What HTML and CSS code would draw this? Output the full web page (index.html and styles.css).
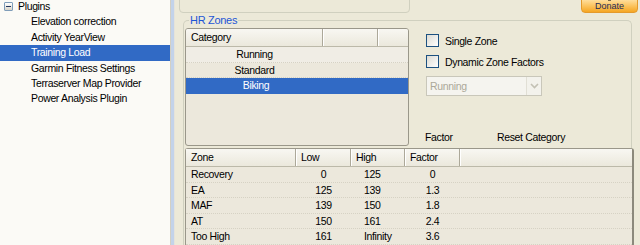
FILE: index.html
```html
<!DOCTYPE html>
<html>
<head>
<meta charset="utf-8">
<link rel="stylesheet" href="styles.css">
</head>
<body>
<div class="app">
  <aside class="tree">
    <div class="node root"><span class="expander"><span class="minus"></span></span><span>Plugins</span></div>
    <div class="node child">Elevation correction</div>
    <div class="node child">Activity YearView</div>
    <div class="node child selected">Training Load</div>
    <div class="node child">Garmin Fitness Settings</div>
    <div class="node child">Terraserver Map Provider</div>
    <div class="node child">Power Analysis Plugin</div>
  </aside>
  <div class="splitter"></div>
  <main class="main">
    <div class="toprow">
      <div class="topbox"></div>
      <div class="donate"><span class="donate-dot"></span><span>Donate</span></div>
    </div>
    <section class="group">
      <span class="legend">HR Zones</span>
      <div class="upper">
        <div class="catlist">
          <div class="lv-head cat-cols">
            <div class="hcell">Category</div>
            <div class="hcell"></div>
            <div class="hcell last"></div>
          </div>
          <div class="cat-row light"><span>Running</span></div>
          <div class="cat-row"><span>Standard</span></div>
          <div class="cat-row sel"><span class="indent">Biking</span></div>
        </div>
        <div class="options">
          <label class="check"><span class="box"></span><span>Single Zone</span></label>
          <label class="check"><span class="box"></span><span>Dynamic Zone Factors</span></label>
          <div class="combo">
            <span class="combo-text">Running</span>
            <span class="combo-btn">
              <svg width="9" height="6" viewBox="0 0 9 6"><path d="M1 1 L4.5 4.5 L8 1" fill="none" stroke="#c3c1b4" stroke-width="1.6"/></svg>
            </span>
          </div>
          <div class="labels">
            <span class="lbl-factor">Factor</span>
            <span>Reset Category</span>
          </div>
        </div>
      </div>
      <div class="zonetable">
        <div class="lv-head zone-cols">
          <div class="hcell">Zone</div>
          <div class="hcell">Low</div>
          <div class="hcell">High</div>
          <div class="hcell">Factor</div>
          <div class="hcell last"></div>
        </div>
        <div class="zone-row zone-cols"><span class="name">Recovery</span><span class="num">0</span><span class="num high">125</span><span class="num">0</span><span></span></div>
        <div class="zone-row zone-cols"><span class="name">EA</span><span class="num">125</span><span class="num high">139</span><span class="num">1.3</span><span></span></div>
        <div class="zone-row zone-cols"><span class="name">MAF</span><span class="num">139</span><span class="num high">150</span><span class="num">1.8</span><span></span></div>
        <div class="zone-row zone-cols"><span class="name">AT</span><span class="num">150</span><span class="num high">161</span><span class="num">2.4</span><span></span></div>
        <div class="zone-row zone-cols"><span class="name">Too High</span><span class="num">161</span><span class="num high">Infinity</span><span class="num">3.6</span><span></span></div>
      </div>
    </section>
  </main>
</div>
</body>
</html>
```
FILE: styles.css
```css
html, body {
  margin: 0;
  padding: 0;
  width: 640px;
  height: 245px;
  overflow: hidden;
  background: #ece9d8;
}
body {
  font-family: "Liberation Sans", Arial, sans-serif;
  font-size: 10.5px;
  letter-spacing: -0.35px;
  color: #000;
}
.app {
  display: flex;
  width: 640px;
  height: 245px;
}

/* Left tree */
.tree {
  width: 170px;
  flex: none;
  background: #fbfaf6;
  padding-top: 0;
  margin-top: -1px;
}
.node {
  height: 15.4px;
  line-height: 15.4px;
  white-space: nowrap;
  display: flex;
  align-items: center;
}
.node.root { padding-left: 4px; }
.expander {
  width: 7px;
  height: 7px;
  border: 1px solid #7f9db9;
  border-radius: 1px;
  background: linear-gradient(#ffffff, #d8d4c8);
  margin-right: 5px;
  display: flex;
  align-items: center;
  justify-content: center;
}
.minus {
  width: 5px;
  height: 1px;
  background: #23365e;
}
.node.child { padding-left: 31px; }
.node.selected {
  background: #316ac5;
  color: #fff;
}

/* Splitter */
.splitter {
  width: 3px;
  flex: none;
  border-left: 1px solid #d3d0c4;
  border-right: 1px solid #e5e3da;
  background: #c3d3ea;
}

/* Main */
.main {
  flex: 1;
  display: flex;
  flex-direction: column;
  min-width: 0;
}
.toprow {
  height: 13px;
  display: flex;
  flex: none;
}
.topbox {
  box-sizing: border-box;
  margin-left: 4px;
  width: 231px;
  height: 32px;
  margin-top: -19px;
  border: 1px solid #d0d0bf;
  border-radius: 4px;
}
.donate {
  box-sizing: border-box;
  margin-left: auto;
  margin-right: 2px;
  width: 57px;
  height: 15px;
  margin-top: -2px;
  border: 1px solid #e49a2c;
  border-radius: 0 0 4px 4px;
  background: linear-gradient(#ffe2a6, #fbbf55 60%, #f5a623);
  color: #1d2b57;
  font-size: 9px;
  letter-spacing: 0;
  display: flex;
  flex-direction: column;
  align-items: center;
  line-height: 10px;
}
.donate-dot {
  width: 3px;
  height: 2px;
  background: #7b6a4a;
  margin-bottom: 0;
}

/* Group box */
.group {
  position: relative;
  flex: 1;
  margin: 7px 8px 0 8px;
  border: 1px solid #d0d0bf;
  border-bottom: none;
  border-radius: 5px 5px 0 0;
  padding: 7px 0 0 1px;
  display: flex;
  flex-direction: column;
}
.legend {
  position: absolute;
  top: -8px;
  left: 5px;
  padding: 0 1px;
  background: #ece9d8;
  color: #1d55d6;
  font-size: 11px;
  letter-spacing: -0.3px;
  line-height: 14px;
}
.upper {
  display: flex;
  flex: none;
}

/* List views */
.catlist {
  box-sizing: border-box;
  width: 224px;
  height: 118px;
  border: 1px solid #9a978a;
  border-radius: 3px;
  background: #ece8dc;
  overflow: hidden;
}
.lv-head {
  display: grid;
  height: 18px;
  box-sizing: border-box;
  border-bottom: 1px solid #bcb9a9;
  background: linear-gradient(#f8f7f2, #ebe8dc);
}
.cat-cols { grid-template-columns: 137px 55px 1fr; }
.hcell {
  border-right: 1px solid #aca899;
  box-shadow: inset 1px 0 0 #ffffff;
  padding-left: 5px;
  line-height: 17px;
  white-space: nowrap;
}
.hcell:first-child { box-shadow: none; }
.hcell.last { border-right: none; }
.cat-row {
  height: 15.5px;
  line-height: 15.5px;
  width: 137px;
  text-align: center;
  border-bottom: 1px dotted #d6d2c4;
  box-sizing: border-box;
}
.cat-row.light { background: #f0ede5; width: auto; }
.cat-row.light span, .cat-row span { display: inline-block; width: 137px; text-align: center; }
.cat-row { width: auto; text-align: left; }
.cat-row.sel {
  background: #316ac5;
  color: #fff;
  border-bottom: none;
}
.indent { padding-left: 3px; box-sizing: border-box; }

/* Options */
.options {
  margin-left: 17px;
  padding-top: 6px;
  display: flex;
  flex-direction: column;
}
.check {
  display: flex;
  align-items: center;
  height: 13px;
  margin-bottom: 8px;
}
.box {
  box-sizing: border-box;
  width: 13px;
  height: 13px;
  border: 1px solid #1c5180;
  background: linear-gradient(135deg, #dcdbd3, #ffffff);
  margin-right: 6px;
}
.combo {
  box-sizing: border-box;
  width: 116px;
  height: 20px;
  margin-top: 0;
  border: 1px solid #c9c7ba;
  background: #f5f4ef;
  display: flex;
  align-items: center;
}
.combo-text {
  flex: 1;
  color: #aca899;
  padding-left: 3px;
}
.combo-btn {
  box-sizing: border-box;
  width: 15px;
  height: 18px;
  border-left: 1px solid #e1dfd5;
  background: #f3f2ec;
  display: flex;
  align-items: center;
  justify-content: center;
}
.labels {
  margin-top: 35px;
  margin-left: -1px;
  display: flex;
}
.lbl-factor { width: 72px; }

/* Zone table */
.zonetable {
  box-sizing: border-box;
  margin-top: 2px;
  margin-right: -3px;
  flex: 1;
  border: 1px solid #9a978a;
  border-right: 2px solid #8c897c;
  border-bottom: none;
  border-radius: 3px 3px 0 0;
  background: #ece8dc;
}
.zone-cols {
  display: grid;
  grid-template-columns: 110px 55px 54px 55px 1fr;
}
.zonetable .lv-head { height: 18px; }
.zone-row {
  height: 15.5px;
  line-height: 15.5px;
  box-sizing: border-box;
  border-bottom: 1px dotted #d6d2c4;
  white-space: nowrap;
}
.zone-row .name { padding-left: 5px; }
.zone-row .num { text-align: center; }
.zone-row .high { text-align: left; padding-left: 13px; }
```
